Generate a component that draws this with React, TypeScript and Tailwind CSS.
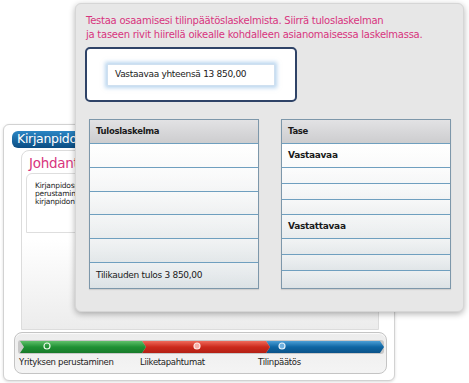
const font = "font-['DejaVu_Sans',Verdana,sans-serif]";

function Row({ h, label, bold = true }: { h: string; label?: string; bold?: boolean }) {
  return (
    <div className={`${h} border-t border-[#6f9fbf] flex items-center px-[6px] bg-gradient-to-b from-white/40 to-transparent`}>
      {label && (
        <span className={`text-[9px] ${bold ? "font-bold" : ""} text-[#1a1a1a] tracking-[-0.3px]`}>{label}</span>
      )}
    </div>
  );
}

function Table({ title, children }: { title: string; children: React.ReactNode }) {
  return (
    <div className="w-[170px] h-[170px] border border-[#7d97aa] flex flex-col shadow-[0_1px_1px_rgba(0,0,0,0.1)]">
      <div className="h-[23px] shrink-0 bg-gradient-to-b from-[#e2e2e4] to-[#cdcdcf] flex items-center px-[6px]">
        <span className="text-[8.5px] font-bold text-[#1a1a1a] tracking-[-0.3px]">{title}</span>
      </div>
      <div className="flex-1 flex flex-col bg-gradient-to-b from-white via-[#eef0f1] to-[#dce2e5]">{children}</div>
    </div>
  );
}

function ProgressBar() {
  return (
    <svg width="366" height="16" viewBox="0 0 366 16">
      <defs>
        <linearGradient id="g" x1="0" y1="0" x2="0" y2="1">
          <stop offset="0" stopColor="#5fc06a" />
          <stop offset="0.5" stopColor="#1f9134" />
          <stop offset="1" stopColor="#177a2a" />
        </linearGradient>
        <linearGradient id="r" x1="0" y1="0" x2="0" y2="1">
          <stop offset="0" stopColor="#ef6a5a" />
          <stop offset="0.5" stopColor="#cc2a1c" />
          <stop offset="1" stopColor="#b31f14" />
        </linearGradient>
        <linearGradient id="b" x1="0" y1="0" x2="0" y2="1">
          <stop offset="0" stopColor="#4a9fd6" />
          <stop offset="0.5" stopColor="#0e66a3" />
          <stop offset="1" stopColor="#0a5288" />
        </linearGradient>
      </defs>
      <rect x="0" y="1" width="366" height="14" rx="3" fill="#c8c8c8" />
      <path d="M248 2 H362 L366 8 L362 14 H248 L252 8 Z" fill="url(#b)" />
      <path d="M124 2 H248 L252 8 L248 14 H124 L128 8 Z" fill="url(#r)" />
      <path d="M2 2 H124 L128 8 L124 14 H2 L6 8 Z" fill="url(#g)" />
      <circle cx="29" cy="7" r="3" fill="none" stroke="#e8f7e8" strokeWidth="1.2" />
      <circle cx="179" cy="7" r="3" fill="#f7b0a8" stroke="#fde8e4" strokeWidth="1.2" />
      <circle cx="264" cy="7" r="3" fill="#6fb0de" stroke="#e4f1fb" strokeWidth="1.2" />
    </svg>
  );
}

export default function App() {
  return (
    <div className={`relative w-[469px] h-[383px] bg-white overflow-hidden ${font}`}>
      {/* back window */}
      <div className="absolute left-[3px] top-[124px] w-[392px] h-[257px] rounded-md border border-[#d2d2d2] bg-white shadow-[0_1px_3px_rgba(0,0,0,0.15)]">
        <div className="ml-[8px] mt-[6px] w-[120px] h-[17px] rounded-l-md bg-gradient-to-b from-[#2b86c4] to-[#0b4d83] flex items-center pl-[5px]">
          <span className="text-white text-[12.5px] tracking-[-0.3px] leading-none">Kirjanpidon</span>
        </div>
        <div className="ml-[17px] mt-[2px] w-[358px] h-[180px] rounded-tl-lg border border-[#dcdcdc] bg-gradient-to-b from-white via-white to-[#ececec] pt-[4px] pl-[7px]">
          <div className="text-[#d8357e] text-[13.5px] leading-[16px] tracking-[-0.3px]">Johdanto</div>
          <div className="mt-[2px] ml-[-3px] w-[340px] h-[60px] rounded-tl-md border border-[#dedede] pt-[8px] pl-[8px] text-[7.5px] leading-[8px] text-[#222] tracking-[-0.2px]">
            <div>Kirjanpidossa</div>
            <div>perustaminen</div>
            <div>kirjanpidon IT</div>
          </div>
        </div>
        <div className="ml-[10px] mt-[2px] w-[373px] h-[42px] rounded-lg border border-[#c4c4c4] bg-gradient-to-b from-[#ececec] to-[#f4f4f4] shadow-[inset_0_1px_1px_rgba(255,255,255,0.8)] pt-[6px] px-[3px]">
          <ProgressBar />
          <div className="flex text-[8.5px] text-[#222] tracking-[-0.3px] leading-none mt-[3px]">
            <span className="w-[122px] pl-[1px]">Yrityksen perustaminen</span>
            <span className="w-[118px]">Liiketapahtumat</span>
            <span>Tilinpäätös</span>
          </div>
        </div>
      </div>

      {/* front panel */}
      <div className="absolute left-[75px] top-[3px] w-[389px] h-[309px] rounded-md border border-[#d6d6d6] bg-[#e7e7e7] shadow-[0_2px_6px_rgba(0,0,0,0.3)]">
        <div className="pl-[10px] pt-[10px] text-[#d8357e] text-[10px] leading-[14px] tracking-[-0.25px]">
          <div>Testaa osaamisesi tilinpäätöslaskelmista. Siirrä tuloslaskelman</div>
          <div>ja taseen rivit hiirellä oikealle kohdalleen asianomaisessa laskelmassa.</div>
        </div>
        <div className="ml-[9px] mt-[5px] w-[212px] h-[55px] rounded-[5px] border-2 border-[#2f4367] bg-white pt-[15px] pl-[20px]">
          <div className="w-[168px] h-[22px] bg-white border border-[#cfe0f0] shadow-[0_0_4px_2px_rgba(130,180,225,0.55)] flex items-center pl-[7px]">
            <span className="text-[9px] text-[#1a1a1a] tracking-[-0.3px]">Vastaavaa yhteensä 13 850,00</span>
          </div>
        </div>
        <div className="ml-[13px] mt-[17px] flex gap-[22px]">
          <Table title="Tuloslaskelma">
            <Row h="h-[24px]" />
            <Row h="h-[24px]" />
            <Row h="h-[23px]" />
            <Row h="h-[24px]" />
            <Row h="h-[24px]" />
            <Row h="flex-1" label="Tilikauden tulos 3 850,00" bold={false} />
          </Table>
          <Table title="Tase">
            <Row h="h-[24px]" label="Vastaavaa" />
            <Row h="h-[16px]" />
            <Row h="h-[16px]" />
            <Row h="h-[15px]" />
            <Row h="h-[24px]" label="Vastattavaa" />
            <Row h="h-[16px]" />
            <Row h="h-[16px]" />
            <Row h="flex-1" />
          </Table>
        </div>
      </div>
    </div>
  );
}
